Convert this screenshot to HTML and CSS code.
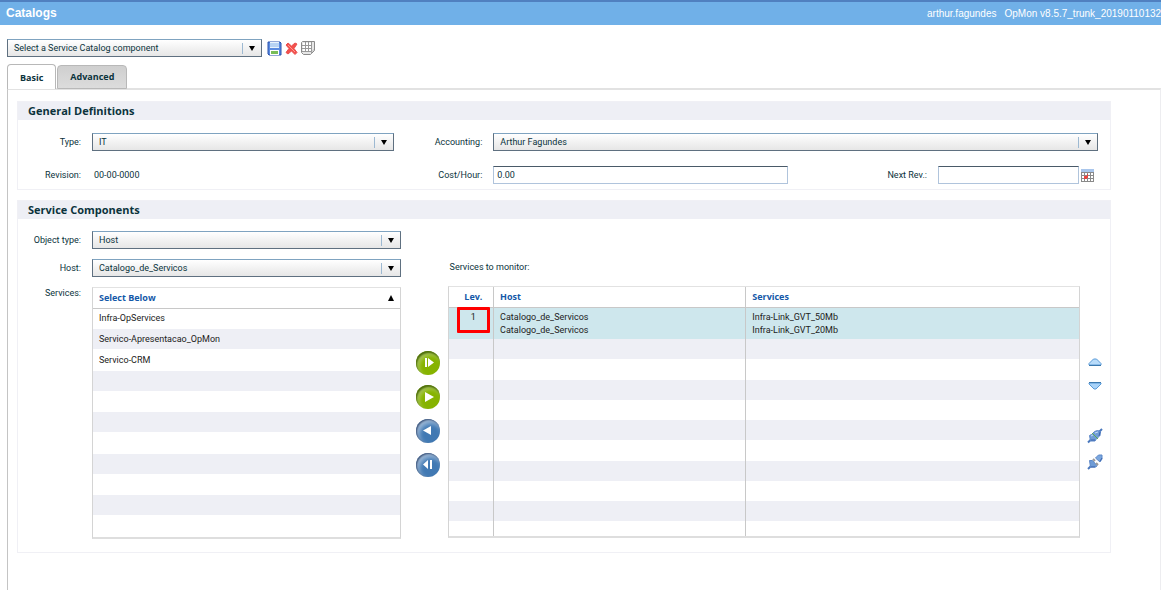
FILE: index.html
```html
<!DOCTYPE html>
<html lang="en">
<head>
    <meta charset="UTF-8">
    <meta name="viewport" content="width=device-width, initial-scale=1.0">
    <title>Catalogs</title>
    <link rel="stylesheet" href="styles.css">
</head>
<body>

<header>
    <h1>Catalogs</h1>
    <div class="session">
        <span>arthur.fagundes</span>
        <span>OpMon v8.5.7_trunk_201901101322</span>
    </div>
</header>

<div class="toolbar">
    <div class="select catalog-select">
        <select aria-label="Service Catalog component">
            <option>Select a Service Catalog component</option>
        </select>
    </div>
    <button class="icon" aria-label="Save">
        <svg width="15" height="15" viewBox="0 0 15 15">
            <path d="M1 1h12l1 1v12H2l-1-1z" fill="#5b8be0" stroke="#2b52ae"/>
            <path d="M3 1h9v6H3z" fill="#e9f3fd"/>
            <path d="M3 3h9M3 5h9" stroke="#86b2ea"/>
            <path d="M3 9h9v5H3z" fill="#fff"/>
            <path d="M4 10h7v3H4z" fill="#78bd58"/>
        </svg>
    </button>
    <button class="icon" aria-label="Delete">
        <svg width="13" height="13" viewBox="0 0 13 13">
            <path d="M1 3l2-2 3.500 3L10 1l2 1-3 4.500 3 4-2 2-3.500-3.500L3 12l-2-1.500 3-4z" fill="#f4504c" stroke="#e85050"/>
            <path d="M3 3l7 7" stroke="#ff9a90"/>
        </svg>
    </button>
    <button class="icon" aria-label="Copy">
        <svg width="14" height="14" viewBox="0 0 14 14">
            <path d="M1.500 .5h12v9l-4 4h-7l-2-2v-10z" fill="#e6e6e6" stroke="#8a8a8a"/>
            <path d="M2 2h8v8H2z" fill="#fff"/>
            <path d="M10.500 1v12M4.500 1v10M7.500 1v10M1 4.500h10M1 7.500h10M1 10.500h10" stroke="#999"/>
            <path d="M11 10l2-2v1l-3 3z" fill="#bbb"/>
        </svg>
    </button>
</div>

<nav class="tabs">
    <button class="tab active">Basic</button>
    <button class="tab">Advanced</button>
</nav>

<main>
    <section>
        <h2>General Definitions</h2>
        <div class="general">
            <label for="type">Type:</label>
            <div class="select">
                <select id="type"><option>IT</option></select>
            </div>
            <label for="accounting">Accounting:</label>
            <div class="select">
                <select id="accounting"><option>Arthur Fagundes</option></select>
            </div>

            <span class="caption">Revision:</span>
            <span class="revision">00-00-0000</span>
            <label for="cost">Cost/Hour:</label>
            <div class="cost-row">
                <input type="text" id="cost" value="0.00">
                <label for="nextRev">Next Rev.:</label>
                <input type="text" id="nextRev" class="date">
                <button class="icon" aria-label="Choose date">
                    <svg width="13" height="13" viewBox="0 0 13 13">
                        <path d="M0 0h13v13H0z" fill="#8a8a8a"/>
                        <path d="M0 0h13v3H0z" fill="#a9c6ec"/>
                        <path d="M1 4h2v2H1zM4 4h2v2H4zM7 4h2v2H7zM10 4h2v2h-2zM1 7h2v2H1zM7 7h2v2H7zM10 7h2v2h-2zM1 10h2v2H1zM4 10h2v2H4zM7 10h2v2H7zM10 10h2v2h-2z" fill="#fff"/>
                        <path d="M3 7h3v3H3zM6 5h1v4H6z" fill="#e8453f"/>
                    </svg>
                </button>
            </div>
        </div>
    </section>

    <section>
        <h2>Service Components</h2>
        <div class="components">
            <div class="source">
                <label for="objectType">Object type:</label>
                <div class="select">
                    <select id="objectType"><option>Host</option></select>
                </div>
                <label for="host">Host:</label>
                <div class="select">
                    <select id="host"><option>Catalogo_de_Servicos</option></select>
                </div>
                <span class="caption services-caption">Services:</span>
                <div class="grid-box">
                    <table class="services">
                        <thead>
                            <tr><th>Select Below <span class="sort"></span></th></tr>
                        </thead>
                        <tbody>
                            <tr><td>Infra-OpServices</td></tr>
                            <tr><td>Servico-Apresentacao_OpMon</td></tr>
                            <tr><td>Servico-CRM</td></tr>
                            <tr><td></td></tr>
                            <tr><td></td></tr>
                            <tr><td></td></tr>
                            <tr><td></td></tr>
                            <tr><td></td></tr>
                            <tr><td></td></tr>
                            <tr><td></td></tr>
                            <tr><td></td></tr>
                            <tr><td></td></tr>
                        </tbody>
                    </table>
                </div>
            </div>

            <div class="move">
                <button class="round green" aria-label="Add in new level">
                    <svg width="24" height="24" viewBox="0 0 24 24"><path d="M9 7h2v9H9zM12 7l6 4.500-6 4.500z"/></svg>
                </button>
                <button class="round green" aria-label="Add">
                    <svg width="24" height="24" viewBox="0 0 24 24"><path d="M9 7l9 5-9 5z"/></svg>
                </button>
                <button class="round blue" aria-label="Remove">
                    <svg width="24" height="24" viewBox="0 0 24 24"><path d="M15 7v9l-8-4.500z"/></svg>
                </button>
                <button class="round blue" aria-label="Remove all">
                    <svg width="24" height="24" viewBox="0 0 24 24"><path d="M12 7v9l-5-4.500zM14 7h2v9h-2z"/></svg>
                </button>
            </div>

            <div class="target">
                <p>Services to monitor:</p>
                <div class="grid-box">
                    <table class="monitor">
                        <thead>
                            <tr><th class="level">Lev.</th><th class="host">Host</th><th>Services</th></tr>
                        </thead>
                        <tbody>
                            <tr class="selected">
                                <td class="level">1<span class="marker"></span></td>
                                <td>Catalogo_de_Servicos<br>Catalogo_de_Servicos</td>
                                <td>Infra-Link_GVT_50Mb<br>Infra-Link_GVT_20Mb</td>
                            </tr>
                            <tr><td></td><td></td><td></td></tr>
                            <tr><td></td><td></td><td></td></tr>
                            <tr><td></td><td></td><td></td></tr>
                            <tr><td></td><td></td><td></td></tr>
                            <tr><td></td><td></td><td></td></tr>
                            <tr><td></td><td></td><td></td></tr>
                            <tr><td></td><td></td><td></td></tr>
                            <tr><td></td><td></td><td></td></tr>
                            <tr><td></td><td></td><td></td></tr>
                            <tr><td></td><td></td><td></td></tr>
                        </tbody>
                    </table>
                </div>
            </div>

            <div class="order">
                <div class="pair">
                    <button class="icon" aria-label="Move up">
                        <svg width="14" height="8" viewBox="0 0 14 8"><path d="M5.500 1h3l4.500 4.500v1.500H1V5.500z" fill="#b9dcfa" stroke="#5b9bd8"/><path d="M1 7.500h12" stroke="#3b78ad"/></svg>
                    </button>
                    <button class="icon" aria-label="Move down">
                        <svg width="14" height="8" viewBox="0 0 14 8"><path d="M1 1h12v1L8 7H6L1 2z" fill="#a9d3f8" stroke="#5b9bd8"/><path d="M1 .5h12" stroke="#3b78ad"/></svg>
                    </button>
                </div>
                <div class="pair">
                    <button class="icon" aria-label="Group">
                        <svg width="16" height="16" viewBox="0 0 16 16">
                            <path d="M1 14.500l3-3M12 4l3-3" stroke="#4a78bd" stroke-width="2"/>
                            <path d="M2.500 7.500l2-1 3-3 3-1 3 1-.5 4-1 1-3 3-1 1.500H3.500z" fill="#6f9cd6" stroke="#5d88c8"/>
                            <path d="M5 5l6 6" stroke="#5fae4e"/>
                            <path d="M4 8l2-1M8 5l3-1" stroke="#c4dbf4"/>
                            <path d="M4 12h4M12 8l1-4" stroke="#3c64ad"/>
                        </svg>
                    </button>
                    <button class="icon" aria-label="Ungroup">
                        <svg width="16" height="16" viewBox="0 0 16 16">
                            <path d="M1 15l3-3" stroke="#4a78bd" stroke-width="2"/>
                            <path d="M2.500 6.500h3l4.500 5-1 1.500H3.500z" fill="#6f9cd6" stroke="#5d88c8"/>
                            <path d="M8.500 4l3-3h3.500v4l-2 3z" fill="#7ba7de" stroke="#5d88c8"/>
                            <path d="M6 5l2 2M9 9l2 2" stroke="#999" stroke-width="2"/>
                            <path d="M4 13h4M13 7l2-3" stroke="#3c64ad"/>
                        </svg>
                    </button>
                </div>
            </div>
        </div>
    </section>
</main>

</body>
</html>
```
FILE: styles.css
```css
* {
    box-sizing: border-box;
}
body {
    display: flex;
    flex-direction: column;
    min-height: 100vh;
    margin: 0;
    background-color: #fff;
    color: #0b333c;
    font-family: Roboto, "Open Sans", sans-serif;
    font-size: 9px;
    line-height: 13px;
}
header {
    display: flex;
    justify-content: space-between;
    align-items: center;
    height: 25px;
    padding-left: 6px;
    border-top: 2px solid #5080c0;
    background-color: #70b0e8;
    color: white;
    font-family: "Liberation Sans", Arial, sans-serif;
}
h1 {
    margin: 0;
    font-size: 12px;
}
.session {
    display: flex;
    gap: 8px;
    width: 234px;
    overflow: hidden;
    font-size: 10px;
    white-space: nowrap;
}
.icon {
    display: flex;
    padding: 0;
    border: none;
    background: none;
    cursor: pointer;
}
.toolbar {
    display: flex;
    align-items: center;
    gap: 3px;
    padding: 14px 7px 7px;
}
.catalog-select {
    width: 255px;
    margin-right: 2px;
}

/* drop-downs and text boxes */
.select {
    position: relative;
    height: 18px;
}
.select::after {
    content: "";
    position: absolute;
    top: 7px;
    right: 7px;
    border: 3px solid transparent;
    border-top: 5px solid #000;
    border-bottom: none;
    pointer-events: none;
}
select {
    appearance: none;
    display: block;
    width: 100%;
    height: 18px;
    padding: 0 24px 0 6px;
    border: 1px solid #5f7080;
    border-top-color: #7fa3c0;
    border-radius: 0;
    background: linear-gradient(#9db9d2, #9db9d2) right 18px center / 1px 11px no-repeat,
        linear-gradient(#fff, #e6e6e6);
    color: inherit;
    font: inherit;
}
input {
    height: 18px;
    min-width: 0;
    padding: 0 3px;
    border: 1px solid #b0c4dc;
    border-top-color: #4a5a68;
    color: inherit;
    font: inherit;
}

/* tabs */
.tabs {
    display: flex;
    align-items: flex-end;
    gap: 1px;
    position: relative;
    margin: 0 0 -1px 7px;
}
.tab {
    height: 24px;
    padding: 0 12px 2px;
    border: 1px solid #b8b8b8;
    border-radius: 4px 4px 0 0;
    background: linear-gradient(#cfcfcf, #dcdcdc);
    color: inherit;
    font: bold 9px "Open Sans", sans-serif;
    cursor: pointer;
}
.tab.active {
    height: 25px;
    padding-bottom: 0;
    border-bottom: none;
    background: white;
}
main {
    flex: 1;
    margin-left: 7px;
    padding: 11px 49px 0 9px;
    border: 1px solid #c4c4c4;
    border-top: 2px solid #e2e2e2;
    border-right-color: #ededf0;
    border-bottom: none;
}
section {
    margin-bottom: 10px;
    border: 1px solid #f0f0f5;
}
h2 {
    margin: 0;
    padding: 0 10px;
    background-color: #eeeff5;
    font: bold 11px/18px "Open Sans", sans-serif;
}
label,
.caption {
    padding-right: 1px;
    text-align: right;
}

.general {
    display: grid;
    grid-template-columns: 64px minmax(0, 1fr) 79px minmax(0, 2fr);
    align-items: center;
    gap: 15px 10px;
    padding: 13px 12px 5px 0;
}
.revision {
    padding-left: 2px;
}
.cost-row {
    display: flex;
    align-items: center;
}
.cost-row #cost {
    flex: 1;
}
.cost-row label {
    width: 140px;
    margin-right: 10px;
}
.cost-row .date {
    width: 141px;
}
.cost-row .icon {
    margin: 0 4px 0 2px;
}

.components {
    display: grid;
    grid-template-columns: minmax(0, 383fr) 47px minmax(0, 633fr) 30px;
    padding: 12px 0 13px;
}
.source {
    display: grid;
    grid-template-columns: 64px minmax(0, 1fr);
    align-items: center;
    gap: 10px;
}
.services-caption {
    align-self: start;
}
.grid-box {
    height: 252px;
    overflow: hidden;
    border: 1px solid #d4d4d4;
    border-top-color: #e2e2e2;
    border-bottom: 2px solid #dedede;
}
table {
    width: 100%;
    border-collapse: collapse;
    table-layout: fixed;
}
th {
    height: 20px;
    padding: 0 6px;
    border-bottom: 1px solid #c8c8c8;
    color: #1458a8;
    font: bold 9px/13px "Open Sans", sans-serif;
    text-align: left;
}
td {
    height: 20px;
    padding: 0 6px;
    color: #222;
}
tbody tr:nth-child(even) {
    background-color: #eeeff5;
}
.services tr:nth-child(odd) td {
    height: 21px;
}
.services tr:nth-child(4n+3) td {
    height: 22px;
}
.sort {
    float: right;
    margin-top: 4px;
    border: 3px solid transparent;
    border-top: none;
    border-bottom: 6px solid #000;
}
.monitor tr:nth-child(4n+3) td {
    height: 21px;
}
.monitor .level {
    width: 45px;
    padding: 0 0 0 5px;
    text-align: center;
}
.monitor th.host {
    width: 40%;
}
.monitor th + th,
.monitor td + td {
    border-left: 1px solid #c8c8c8;
}
.monitor .selected td {
    height: 32px;
    padding-top: 3px;
    padding-bottom: 2px;
    background-color: #cee7ed;
    vertical-align: top;
}
.selected .level {
    position: relative;
}
.marker {
    position: absolute;
    top: -1px;
    left: 8px;
    width: 33px;
    height: 26px;
    border: 3px solid #f00;
    border-radius: 1px;
}

.move {
    display: flex;
    flex-direction: column;
    align-items: center;
    gap: 10px;
    padding: 120px 0 0 7px;
}
.round {
    width: 24px;
    height: 24px;
    padding: 0;
    border: none;
    border-radius: 50%;
    cursor: pointer;
}
.round svg {
    display: block;
    fill: white;
}
.green {
    background: radial-gradient(circle at 60% 65%, #86b300 50%, #5d8500 72%);
    box-shadow: inset 1px 2px 2px #4a6a08, inset 3px 4px 4px #b4d064;
}
.blue {
    background: radial-gradient(circle at 60% 65%, #4179b3 50%, #2d5f9b 72%);
    box-shadow: inset 1px 1px 2px #3a4f74, inset 3px 4px 5px #a9c4e0;
}
.target p {
    margin: 30px 2px 12px;
}
.order {
    display: flex;
    flex-direction: column;
    gap: 38px;
    padding-top: 127px;
}
.pair {
    display: flex;
    flex-direction: column;
    align-items: center;
    gap: 16px;
}
.pair + .pair {
    gap: 10px;
}
```
